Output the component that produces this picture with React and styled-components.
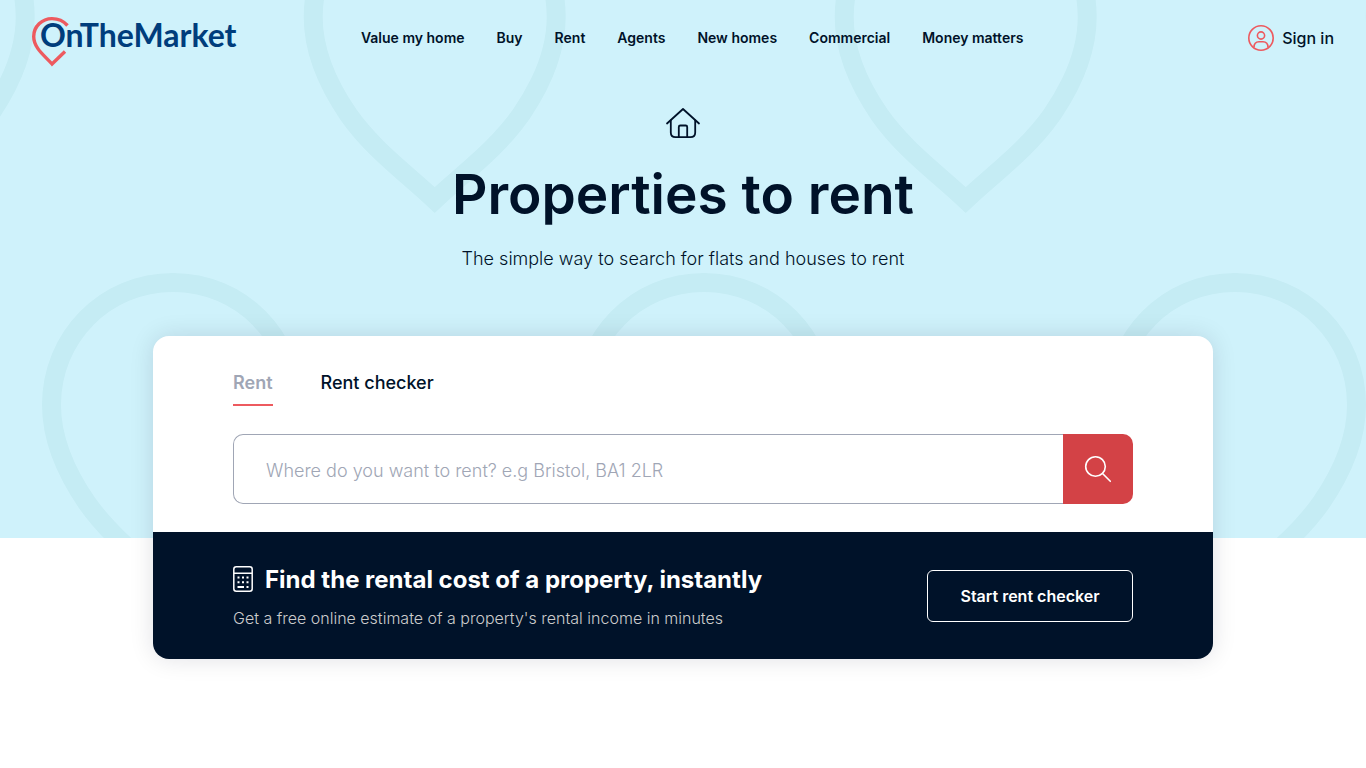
import React from 'react';
import styled, { createGlobalStyle } from 'styled-components';

const GlobalStyle = createGlobalStyle`
  *, *::before, *::after { box-sizing: border-box; }
  body {
    margin: 0;
    background: #fff;
    color: #001229;
    font-family: Inter, "Liberation Sans", sans-serif;
  }
  h1, h2, p, ul { margin: 0; padding: 0; }
  a { color: inherit; text-decoration: none; }
  button, input { font-family: inherit; }
`;

const Page = styled.div`
  min-height: 100vh;
  padding-bottom: 48px;
`;

const Hero = styled.div`
  position: relative;
  isolation: isolate;
  padding-bottom: 202px;
  background: #cff2fb;
`;

const Backdrop = styled.svg`
  position: absolute;
  inset: 0;
  z-index: -1;
  width: 100%;
  height: 100%;
`;

const Header = styled.header`
  display: flex;
  align-items: center;
  height: 76px;
  padding: 0 32px;
`;

const LogoLink = styled.a`
  flex: 0 0 206px;
  height: 52px;
  margin-top: 8px;
  svg { display: block; }
`;

const LogoText = styled.text`
  font-family: Lato, sans-serif;
  font-size: 32px;
  font-weight: 700;
  fill: #003d7c;
`;

const Nav = styled.nav`
  margin: 0 auto 0 9vw;
`;

const NavList = styled.ul`
  display: flex;
  gap: 32px;
  list-style: none;
`;

const NavLink = styled.a`
  display: block;
  font-size: 14px;
  line-height: 20px;
  font-weight: 600;
  white-space: nowrap;
`;

const SignIn = styled.a`
  display: flex;
  align-items: center;
  justify-content: flex-end;
  gap: 8px;
  font-size: 16px;
  line-height: 24px;
  font-weight: 500;
  white-space: nowrap;
`;

const Intro = styled.section`
  display: flex;
  flex-direction: column;
  align-items: center;
  padding: 30px 24px 0;
  text-align: center;
`;

const Title = styled.h1`
  margin-top: 18px;
  font-size: 55px;
  line-height: 72px;
  font-weight: 600;
`;

const Tagline = styled.p`
  margin-top: 15px;
  padding-bottom: 63px;
  font-size: 18px;
  line-height: 28px;
  font-weight: 300;
`;

const Card = styled.main`
  position: relative;
  width: calc(100% - 48px);
  max-width: 1060px;
  margin: -202px auto 0;
  overflow: hidden;
  border-radius: 16px;
  background: #fff;
  box-shadow: 0 0 24px rgba(0, 18, 41, 0.12);
`;

const SearchPanel = styled.section`
  padding: 32px 80px 28px;
`;

const Tabs = styled.div`
  display: flex;
  gap: 48px;
`;

const Tab = styled.button`
  height: 38px;
  padding: 0 0 6px;
  border: 0;
  border-bottom: 2px solid ${({ $active }) => ($active ? '#ed5a5f' : 'transparent')};
  background: none;
  color: ${({ $active }) => ($active ? '#a0a6b5' : '#001229')};
  font-size: 18px;
  line-height: 28px;
  font-weight: ${({ $active }) => ($active ? 600 : 500)};
`;

const SearchForm = styled.form`
  display: flex;
  height: 70px;
  margin-top: 28px;
`;

const SearchInput = styled.input`
  flex: 1;
  min-width: 0;
  padding: 2px 32px 0;
  border: 1px solid #a0a6b5;
  border-right: 0;
  border-radius: 10px 0 0 10px;
  outline: 0;
  background: #fff;
  color: #001229;
  font-size: 18px;
  font-weight: 300;
  &::placeholder { color: #a0a6b5; opacity: 1; }
`;

const SearchButton = styled.button`
  display: grid;
  place-items: center;
  width: 70px;
  padding: 0;
  border: 0;
  border-radius: 0 10px 10px 0;
  background: #d34246;
`;

const Promo = styled.section`
  display: flex;
  align-items: center;
  justify-content: space-between;
  min-height: 127px;
  padding: 0 80px;
  background: #001229;
  color: #fff;
`;

const PromoHeading = styled.div`
  display: flex;
  align-items: center;
  gap: 12px;
`;

const PromoTitle = styled.h2`
  padding-top: 2px;
  font-size: 24px;
  line-height: 32px;
  font-weight: 700;
`;

const PromoText = styled.p`
  margin-top: 10px;
  color: #ccc;
  font-size: 16px;
  line-height: 24px;
  font-weight: 300;
`;

const PromoButton = styled.button`
  flex: none;
  width: 206px;
  height: 52px;
  border: 1px solid #fff;
  border-radius: 6px;
  background: none;
  color: #fff;
  font-size: 16px;
  font-weight: 600;
`;

const navItems = ['Value my home', 'Buy', 'Rent', 'Agents', 'New homes', 'Commercial', 'Money matters'];

const pinPath =
  'M0 -122.5 C-68 -122.5 -121.5 -68 -121.5 0 C-121.5 34 -108 66 -86 98 C-62 132 -30 155 0 183 C30 155 62 132 86 98 C108 66 121.5 34 121.5 0 C121.5 -68 68 -122.5 0 -122.5 Z';

function PinBackdrop() {
  return (
    <Backdrop aria-hidden="true">
      <defs>
        <pattern id="pins" width="531" height="776" patternUnits="userSpaceOnUse">
          <g fill="none" stroke="#c5ecf4" strokeWidth="19">
            <path d={pinPath} transform="translate(434.7 17)" />
            <path d={pinPath} transform="translate(-96.3 17)" />
            <path d={pinPath} transform="translate(173 405)" />
          </g>
        </pattern>
      </defs>
      <rect width="100%" height="100%" fill="url(#pins)" />
    </Backdrop>
  );
}

function Logo() {
  return (
    <svg width="206" height="52" viewBox="0 0 206 52" role="img" aria-label="OnTheMarket">
      <path d="M35.5 9.5 C31.5 5 26.5 2.6 20 2.6 C10 2.6 1.7 10.5 1.7 20.5 C1.7 32 12.5 39.5 20 48 L33 35.5" fill="none" stroke="#ed5a5f" strokeWidth="3.4" />
      <LogoText x="8" y="31">OnTheMarket</LogoText>
    </svg>
  );
}

function UserIcon() {
  return (
    <svg width="26" height="26" viewBox="0 0 26 26" fill="none" stroke="#ed5a5f" strokeWidth="1.6" aria-hidden="true">
      <circle cx="13" cy="13" r="12.2" />
      <circle cx="13" cy="10.5" r="3.6" />
      <path d="M6 22.5 C6 18 8 16.8 11 16.8 H15 C18 16.8 20 18 20 22.5" />
    </svg>
  );
}

function HouseIcon() {
  return (
    <svg width="36" height="34" viewBox="0 0 36 34" fill="none" stroke="#001229" strokeWidth="1.8" strokeLinecap="round" strokeLinejoin="round" aria-hidden="true">
      <path d="M2 17.5 L18 3 L34 17.5" />
      <path d="M5.8 14.5 V26.5 C5.8 29.7 7.3 31.2 10.5 31.2 H25.5 C28.7 31.2 30.2 29.7 30.2 26.5 V14.5" />
      <path d="M13.8 31 V21 C13.8 20 14.3 19.5 15.3 19.5 H20.7 C21.7 19.5 22.2 20 22.2 21 V31" />
    </svg>
  );
}

function SearchIcon() {
  return (
    <svg width="28" height="28" viewBox="0 0 28 28" fill="none" stroke="#fff" strokeWidth="1.6" strokeLinecap="round" aria-hidden="true">
      <circle cx="11.5" cy="11.5" r="9.8" />
      <path d="M18.8 18.8 L26.3 26.3" />
    </svg>
  );
}

function CalculatorIcon() {
  return (
    <svg width="20" height="26" viewBox="0 0 20 26" fill="none" stroke="#fff" strokeWidth="1.5" aria-hidden="true">
      <rect x="0.8" y="0.8" width="18.4" height="24.4" rx="2.5" />
      <path d="M1 7.3 H19" />
      <path d="M4.5 11.5 h2 M9 11.5 h2 M13.5 11.5 h2 M4.5 16.3 h2 M9 16.3 h2 M13.5 16.3 h2 M4.5 21 h6.5 M13.5 21 h2" strokeWidth="2" />
    </svg>
  );
}

export default function App() {
  return (
    <Page>
      <GlobalStyle />
      <Hero>
        <PinBackdrop />
        <Header>
          <LogoLink href="#"><Logo /></LogoLink>
          <Nav aria-label="Main">
            <NavList>
              {navItems.map((item) => (
                <li key={item}><NavLink href="#">{item}</NavLink></li>
              ))}
            </NavList>
          </Nav>
          <SignIn href="#"><UserIcon />Sign in</SignIn>
        </Header>
        <Intro>
          <HouseIcon />
          <Title>Properties to rent</Title>
          <Tagline>The simple way to search for flats and houses to rent</Tagline>
        </Intro>
      </Hero>
      <Card>
        <SearchPanel>
          <Tabs role="tablist">
            <Tab type="button" role="tab" aria-selected="true" $active>Rent</Tab>
            <Tab type="button" role="tab" aria-selected="false">Rent checker</Tab>
          </Tabs>
          <SearchForm role="search" onSubmit={(event) => event.preventDefault()}>
            <SearchInput type="text" aria-label="Location" placeholder="Where do you want to rent? e.g Bristol, BA1 2LR" />
            <SearchButton type="submit" aria-label="Search"><SearchIcon /></SearchButton>
          </SearchForm>
        </SearchPanel>
        <Promo>
          <div>
            <PromoHeading>
              <CalculatorIcon />
              <PromoTitle>Find the rental cost of a property, instantly</PromoTitle>
            </PromoHeading>
            <PromoText>Get a free online estimate of a property's rental income in minutes</PromoText>
          </div>
          <PromoButton type="button">Start rent checker</PromoButton>
        </Promo>
      </Card>
    </Page>
  );
}
